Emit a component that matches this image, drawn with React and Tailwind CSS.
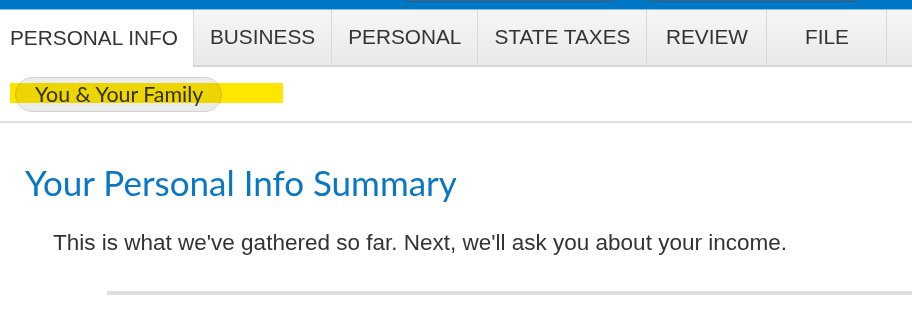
// App.jsx — tax return "Personal Info" step header

const TABS = [
  { label: 'PERSONAL INFO', active: true },
  { label: 'BUSINESS' },
  { label: 'PERSONAL' },
  { label: 'STATE TAXES' },
  { label: 'REVIEW' },
  { label: 'FILE' },
]

export default function App() {
  return (
    <div className="w-[912px] h-[309px] overflow-hidden bg-white font-['Liberation_Sans',Arial,sans-serif] text-[#333]">
      {/* Top bar — only the bottom edge of the search fields shows */}
      <div className="h-[9px] bg-[#0077c5] flex items-start">
        <div className="ml-[406px] w-[208px] h-[2px] rounded-b-[3px] border-b border-x border-[#2b5f86] bg-[#1f6ea6]" />
        <div className="ml-[35px] w-[208px] h-[2px] rounded-b-[3px] border-b border-x border-[#2b5f86] bg-[#1f6ea6]" />
      </div>
      <div className="h-px bg-[#7cc0ec]" />

      {/* Step tabs */}
      <div className="flex h-[57px]">
        {TABS.map(t => (
          <div
            key={t.label}
            className={
              t.active
                ? 'flex shrink-0 items-center h-full pl-[10px] pr-[15px] bg-white text-[20.8px] leading-none whitespace-nowrap'
                : 'flex shrink-0 items-center justify-center h-full min-w-[120px] px-[16px] text-[20.8px] leading-none whitespace-nowrap border-l border-[#d9d9d9] border-b-[2px] border-b-[#d6d6d6] bg-linear-to-b from-[#f6f6f6] to-[#e9e9e9]'
            }
          >
            {t.label}
          </div>
        ))}
        <div className="flex-1 border-l border-[#d9d9d9] border-b-[2px] border-b-[#d6d6d6] bg-linear-to-b from-[#f6f6f6] to-[#e9e9e9]" />
      </div>

      {/* Sub-step pill */}
      <div className="h-[56px] border-b-[2px] border-[#e2e2e2] pl-[15px] pt-[10px]">
        <div className="relative w-fit">
          <div className="h-[35px] w-[207px] rounded-full border border-[#d4d4d4] bg-[#ececec] flex items-center pl-[19px] text-[21.4px] font-['Lato',sans-serif] text-[#333]">
            You &amp; Your Family
          </div>
          {/* yellow highlighter mark */}
          <div className="absolute left-[-5px] top-[6px] w-[273px] h-[20px] bg-[#ffe600] mix-blend-multiply" />
        </div>
      </div>

      {/* Summary */}
      <div className="pt-[39px]">
        <h1 className="pl-[25px] text-[35px] leading-[40px] text-[#0a77c4] font-['Lato',sans-serif]">
          Your Personal Info Summary
        </h1>
        <p className="pl-[53px] mt-[28px] text-[22.5px] leading-[26px] text-[#333]">
          This is what we've gathered so far. Next, we'll ask you about your income.
        </p>
        <div className="ml-[107px] mt-[35px] h-[4px] bg-[#dedede]" />
      </div>
    </div>
  )
}
